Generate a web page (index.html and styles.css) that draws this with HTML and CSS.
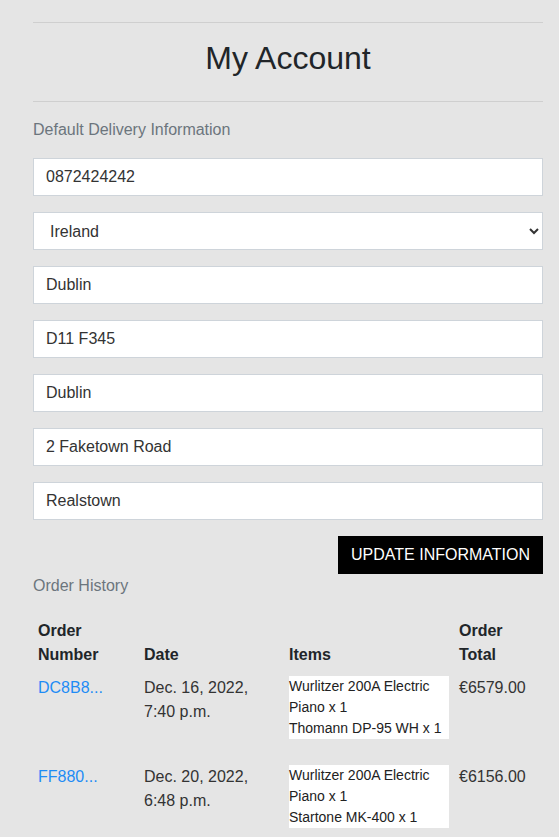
FILE: index.html
```html
<!DOCTYPE html>
<html lang="en">
<head>
<meta charset="utf-8">
<title>My Account</title>
<link rel="stylesheet" href="styles.css">
</head>
<body>
<main class="page">
  <hr class="rule rule-top">
  <h1 class="title">My Account</h1>
  <hr class="rule">
  <p class="section-label">Default Delivery Information</p>
  <form class="delivery-form">
    <input class="field" type="text" value="0872424242">
    <select class="field field-select">
      <option selected>Ireland</option>
    </select>
    <input class="field" type="text" value="Dublin">
    <input class="field" type="text" value="D11 F345">
    <input class="field" type="text" value="Dublin">
    <input class="field" type="text" value="2 Faketown Road">
    <input class="field" type="text" value="Realstown">
    <div class="form-actions">
      <button class="btn-update" type="button">Update Information</button>
    </div>
  </form>
  <p class="section-label history-label">Order History</p>
  <table class="orders">
    <colgroup>
      <col class="col-number">
      <col class="col-date">
      <col class="col-items">
      <col class="col-total">
    </colgroup>
    <thead>
      <tr>
        <th>Order Number</th>
        <th>Date</th>
        <th>Items</th>
        <th>Order Total</th>
      </tr>
    </thead>
    <tbody>
      <tr>
        <td><a class="order-link" href="#">DC8B8...</a></td>
        <td>Dec. 16, 2022, 7:40 p.m.</td>
        <td>
          <div class="items-box">
            <div class="item">Wurlitzer 200A Electric Piano x 1</div>
            <div class="item">Thomann DP-95 WH x 1</div>
          </div>
        </td>
        <td>€6579.00</td>
      </tr>
      <tr>
        <td><a class="order-link" href="#">FF880...</a></td>
        <td>Dec. 20, 2022, 6:48 p.m.</td>
        <td>
          <div class="items-box">
            <div class="item">Wurlitzer 200A Electric Piano x 1</div>
            <div class="item">Startone MK-400 x 1</div>
          </div>
        </td>
        <td>€6156.00</td>
      </tr>
    </tbody>
  </table>
</main>
</body>
</html>
```

FILE: styles.css
```css
html, body {
  margin: 0;
  padding: 0;
  background: #e5e5e5;
}

body {
  font-family: "Liberation Sans", Arial, sans-serif;
  font-size: 16px;
  line-height: 1.5;
  color: #212529;
}

.page {
  padding: 22px 16px 0 33px;
}

.rule {
  border: 0;
  border-top: 1px solid #cfcfcf;
  margin: 0;
}

.title {
  font-size: 32px;
  font-weight: 400;
  line-height: 1.2;
  text-align: center;
  margin: 16px 0 24px;
  color: #212529;
}

.section-label {
  color: #6c757d;
  margin: 16px 0 16px;
}

.delivery-form {
  display: flex;
  flex-direction: column;
  gap: 16px;
}

.field {
  box-sizing: border-box;
  display: block;
  width: 100%;
  height: 38px;
  padding: 6px 12px;
  border: 1px solid #ced4da;
  border-radius: 0;
  background: #fff;
  font-family: "Liberation Sans", Arial, sans-serif;
  font-size: 16px;
  line-height: 1.5;
  color: #333;
  margin: 0;
}

.field-select {
  padding: 6px 8px 6px 12px;
}

.form-actions {
  display: flex;
  justify-content: flex-end;
}

.btn-update {
  height: 38px;
  padding: 0 13px;
  border: 0;
  border-radius: 0;
  background: #000;
  color: #fff;
  font-family: "Liberation Sans", Arial, sans-serif;
  font-size: 16px;
  text-transform: uppercase;
  cursor: pointer;
}

.history-label {
  margin: 0 0 16px;
}

.orders {
  width: 510px;
  table-layout: fixed;
  border-collapse: collapse;
}

.col-number { width: 106px; }
.col-date { width: 145px; }
.col-items { width: 170px; }
.col-total { width: 89px; }

.orders th,
.orders td {
  padding: 5px 5px 4.8px;
  text-align: left;
  vertical-align: top;
}

.orders th {
  vertical-align: bottom;
  font-weight: 700;
  color: #212529;
  padding-bottom: 4px;
}

.orders td {
  color: #333;
}

.order-link {
  color: #1e8cf5;
  text-decoration: none;
}

.items-box {
  background: #fff;
  font-size: 14px;
  line-height: 21px;
  color: #222;
  margin-bottom: 16px;
}
```
